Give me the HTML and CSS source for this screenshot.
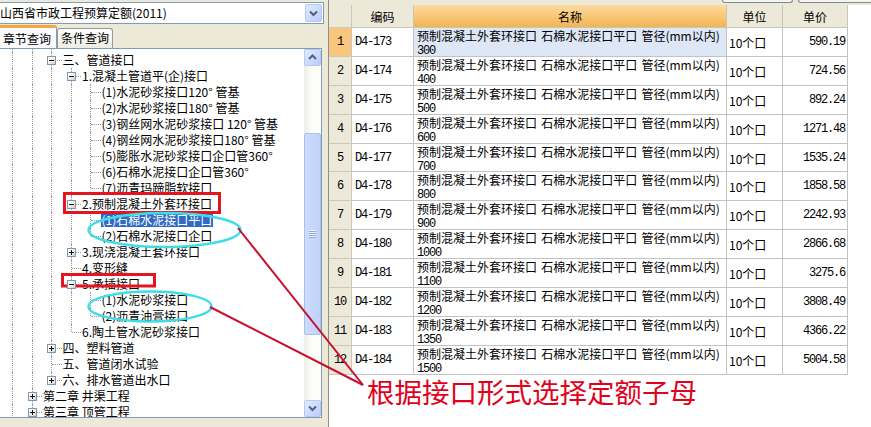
FILE: index.html
```html
<!DOCTYPE html>
<html lang="zh-CN">
<head>
<meta charset="utf-8">
<title>定额查询</title>
<link rel="stylesheet" href="styles.css">
</head>
<body>
<div class="app">
  <div class="left">
    <div class="combo">
      <span class="combo-text">山西省市政工程预算定额(2011)</span>
      <span class="sbtn combo-btn"><svg width="15" height="15" viewBox="0 0 15 15"><path d="M4 5.5 L7.5 9 L11 5.5" fill="none" stroke="#4d6185" stroke-width="2"/></svg></span>
    </div>
    <div class="tabs">
      <div class="tab active">章节查询</div>
      <div class="tab">条件查询</div>
    </div>
    <div class="treebox">
      <div class="tree">
        <div class="row spacer"><i class="c p"></i><i class="c p"></i><i class="c p"></i></div>
        <div class="row"><i class="c p"></i><i class="c p"></i><i class="c t"><b class="x m"></b></i><span class="lbl">三、管道接口</span></div>
        <div class="row"><i class="c p"></i><i class="c p"></i><i class="c p"></i><i class="c t"><b class="x m"></b></i><span class="lbl">1.混凝土管道平(企)接口</span></div>
        <div class="row"><i class="c p"></i><i class="c p"></i><i class="c p"></i><i class="c p"></i><i class="c t"></i><span class="lbl">(1)水泥砂浆接口120° 管基</span></div>
        <div class="row"><i class="c p"></i><i class="c p"></i><i class="c p"></i><i class="c p"></i><i class="c t"></i><span class="lbl">(2)水泥砂浆接口180° 管基</span></div>
        <div class="row"><i class="c p"></i><i class="c p"></i><i class="c p"></i><i class="c p"></i><i class="c t"></i><span class="lbl">(3)钢丝网水泥砂浆接口 120° 管基</span></div>
        <div class="row"><i class="c p"></i><i class="c p"></i><i class="c p"></i><i class="c p"></i><i class="c t"></i><span class="lbl">(4)钢丝网水泥砂浆接口180° 管基</span></div>
        <div class="row"><i class="c p"></i><i class="c p"></i><i class="c p"></i><i class="c p"></i><i class="c t"></i><span class="lbl">(5)膨胀水泥砂浆接口企口管360°</span></div>
        <div class="row"><i class="c p"></i><i class="c p"></i><i class="c p"></i><i class="c p"></i><i class="c t"></i><span class="lbl">(6)石棉水泥接口企口管360°</span></div>
        <div class="row"><i class="c p"></i><i class="c p"></i><i class="c p"></i><i class="c p"></i><i class="c e"></i><span class="lbl">(7)沥青玛蹄脂软接口</span></div>
        <div class="row"><i class="c p"></i><i class="c p"></i><i class="c p"></i><i class="c t"><b class="x m"></b></i><span class="lbl">2.预制混凝土外套环接口</span></div>
        <div class="row"><i class="c p"></i><i class="c p"></i><i class="c p"></i><i class="c p"></i><i class="c t"></i><span class="lbl sel">(1)石棉水泥接口平口</span></div>
        <div class="row"><i class="c p"></i><i class="c p"></i><i class="c p"></i><i class="c p"></i><i class="c e"></i><span class="lbl">(2)石棉水泥接口企口</span></div>
        <div class="row"><i class="c p"></i><i class="c p"></i><i class="c p"></i><i class="c t"><b class="x pl"></b></i><span class="lbl">3.现浇混凝土套环接口</span></div>
        <div class="row"><i class="c p"></i><i class="c p"></i><i class="c p"></i><i class="c t"></i><span class="lbl">4.变形缝</span></div>
        <div class="row"><i class="c p"></i><i class="c p"></i><i class="c p"></i><i class="c t"><b class="x m"></b></i><span class="lbl">5.承插接口</span></div>
        <div class="row"><i class="c p"></i><i class="c p"></i><i class="c p"></i><i class="c p"></i><i class="c t"></i><span class="lbl">(1)水泥砂浆接口</span></div>
        <div class="row"><i class="c p"></i><i class="c p"></i><i class="c p"></i><i class="c p"></i><i class="c e"></i><span class="lbl">(2)沥青油膏接口</span></div>
        <div class="row"><i class="c p"></i><i class="c p"></i><i class="c p"></i><i class="c e"></i><span class="lbl">6.陶土管水泥砂浆接口</span></div>
        <div class="row"><i class="c p"></i><i class="c p"></i><i class="c t"><b class="x pl"></b></i><span class="lbl">四、塑料管道</span></div>
        <div class="row"><i class="c p"></i><i class="c p"></i><i class="c t"></i><span class="lbl">五、管道闭水试验</span></div>
        <div class="row"><i class="c p"></i><i class="c p"></i><i class="c e"><b class="x pl"></b></i><span class="lbl">六、排水管道出水口</span></div>
        <div class="row"><i class="c p"></i><i class="c t"><b class="x pl"></b></i><span class="lbl">第二章 井渠工程</span></div>
        <div class="row"><i class="c p"></i><i class="c t"><b class="x pl"></b></i><span class="lbl">第三章 顶管工程</span></div>
      </div>
      <div class="vscroll">
        <span class="sbtn"><svg width="15" height="15" viewBox="0 0 15 15"><path d="M4 9 L7.5 5.5 L11 9" fill="none" stroke="#4d6185" stroke-width="2"/></svg></span>
        <div class="track"><div class="thumb"><span class="grip"></span></div></div>
        <span class="sbtn"><svg width="15" height="15" viewBox="0 0 15 15"><path d="M4 5.5 L7.5 9 L11 5.5" fill="none" stroke="#4d6185" stroke-width="2"/></svg></span>
      </div>
    </div>
  </div>

  <div class="right">
    <div class="strip"><span class="stub first"></span><span class="stub"></span></div>
    <div class="grid">
      <div class="hd rn"></div><div class="hd">编码</div><div class="hd sorted">名称</div><div class="hd">单位</div><div class="hd">单价</div>

      <div class="rn cur m">1</div><div class="code m">D4-173</div><div class="name hl">预制混凝土外套环接口 石棉水泥接口平口 管径(mm以内)<br><span class="m">300</span></div><div class="unit">10个口</div><div class="price m">590.19</div>
      <div class="rn m">2</div><div class="code m">D4-174</div><div class="name">预制混凝土外套环接口 石棉水泥接口平口 管径(mm以内)<br><span class="m">400</span></div><div class="unit">10个口</div><div class="price m">724.56</div>
      <div class="rn m">3</div><div class="code m">D4-175</div><div class="name">预制混凝土外套环接口 石棉水泥接口平口 管径(mm以内)<br><span class="m">500</span></div><div class="unit">10个口</div><div class="price m">892.24</div>
      <div class="rn m">4</div><div class="code m">D4-176</div><div class="name">预制混凝土外套环接口 石棉水泥接口平口 管径(mm以内)<br><span class="m">600</span></div><div class="unit">10个口</div><div class="price m">1271.48</div>
      <div class="rn m">5</div><div class="code m">D4-177</div><div class="name">预制混凝土外套环接口 石棉水泥接口平口 管径(mm以内)<br><span class="m">700</span></div><div class="unit">10个口</div><div class="price m">1535.24</div>
      <div class="rn m">6</div><div class="code m">D4-178</div><div class="name">预制混凝土外套环接口 石棉水泥接口平口 管径(mm以内)<br><span class="m">800</span></div><div class="unit">10个口</div><div class="price m">1858.58</div>
      <div class="rn m">7</div><div class="code m">D4-179</div><div class="name">预制混凝土外套环接口 石棉水泥接口平口 管径(mm以内)<br><span class="m">900</span></div><div class="unit">10个口</div><div class="price m">2242.93</div>
      <div class="rn m">8</div><div class="code m">D4-180</div><div class="name">预制混凝土外套环接口 石棉水泥接口平口 管径(mm以内)<br><span class="m">1000</span></div><div class="unit">10个口</div><div class="price m">2866.68</div>
      <div class="rn m">9</div><div class="code m">D4-181</div><div class="name">预制混凝土外套环接口 石棉水泥接口平口 管径(mm以内)<br><span class="m">1100</span></div><div class="unit">10个口</div><div class="price m">3275.6</div>
      <div class="rn m">10</div><div class="code m">D4-182</div><div class="name">预制混凝土外套环接口 石棉水泥接口平口 管径(mm以内)<br><span class="m">1200</span></div><div class="unit">10个口</div><div class="price m">3808.49</div>
      <div class="rn m">11</div><div class="code m">D4-183</div><div class="name">预制混凝土外套环接口 石棉水泥接口平口 管径(mm以内)<br><span class="m">1350</span></div><div class="unit">10个口</div><div class="price m">4366.22</div>
      <div class="rn m">12</div><div class="code m">D4-184</div><div class="name">预制混凝土外套环接口 石棉水泥接口平口 管径(mm以内)<br><span class="m">1500</span></div><div class="unit">10个口</div><div class="price m">5004.58</div>
    </div>
  </div>
</div>

<svg class="marks" width="871" height="427" viewBox="0 0 871 427">
  <rect x="64.5" y="193.5" width="155" height="19" fill="none" stroke="#e51520" stroke-width="3"/>
  <rect x="62.5" y="274.5" width="92" height="11.5" fill="none" stroke="#e51520" stroke-width="3"/>
  <ellipse cx="164.5" cy="230" rx="76" ry="17" fill="none" stroke="#3fdde6" stroke-width="2.5"/>
  <ellipse cx="150" cy="306.5" rx="61.5" ry="15" fill="none" stroke="#3fdde6" stroke-width="2.5"/>
  <line x1="238" y1="228" x2="363" y2="385" stroke="#c8102e" stroke-width="2"/>
  <line x1="210" y1="307" x2="363" y2="385" stroke="#c8102e" stroke-width="2"/>
</svg>
<div class="note">根据接口形式选择定额子母</div>
</body>
</html>
```

FILE: styles.css
```css
* { box-sizing: border-box; }
html, body { margin: 0; padding: 0; }
body {
  width: 871px;
  height: 427px;
  overflow: hidden;
  position: relative;
  background: #ece9d8;
  font-family: "Noto Sans CJK SC", "Noto Sans", sans-serif;
  font-size: 12px;
  color: #000;
}
.m {
  font-family: "Liberation Mono", monospace;
  letter-spacing: -1.2px;
}
.app { display: flex; height: 427px; }

/* ---------- left panel ---------- */
.left {
  flex: none;
  width: 327px;
  margin-left: -3px;
  display: flex;
  flex-direction: column;
}
.combo {
  margin-top: 2px;
  height: 22px;
  border: 1px solid #7f9db9;
  background: #fff;
  display: flex;
  align-items: center;
  padding: 0 1px 0 2px;
}
.combo-text { flex: 1; white-space: nowrap; line-height: 18px; }
.sbtn {
  flex: none;
  width: 17px;
  height: 17px;
  display: flex;
  align-items: center;
  justify-content: center;
  background: linear-gradient(135deg, #e3ebfe, #b9cdfa);
  border: 1px solid #b5c8f2;
  border-radius: 2px;
}
.combo-btn { height: 18px; }

.tabs {
  height: 24px;
  display: flex;
  align-items: flex-end;
}
.tab {
  width: 56px;
  height: 20px;
  line-height: 18px;
  text-align: center;
  border: 1px solid #919b9c;
  border-bottom: none;
  border-radius: 3px 3px 0 0;
  background: linear-gradient(#ffffff, #ecebe5);
}
.tab.active {
  width: 60px;
  height: 23px;
  line-height: 21px;
  background: #fcfcfe;
  border-top: 3px solid #f4a73a;
}

.treebox {
  height: 370px;
  margin-right: 2px;
  border: 1px solid #7f9db9;
  background: #fff;
  display: flex;
}
.tree {
  flex: 1;
  overflow: hidden;
  padding-left: 5px;
}
.row {
  display: flex;
  align-items: center;
  height: 16px;
  white-space: nowrap;
}
.row.spacer { height: 3px; }
.c {
  flex: none;
  width: 19.5px;
  height: 100%;
  position: relative;
}
.c.p::before, .c.t::before, .c.e::before {
  content: "";
  position: absolute;
  left: 9px;
  top: 0;
  bottom: 0;
  border-left: 1px dotted #9a9a9a;
}
.c.e::before { bottom: auto; height: 8px; }
.c.t::after, .c.e::after {
  content: "";
  position: absolute;
  left: 10px;
  right: 0;
  top: 8px;
  border-top: 1px dotted #9a9a9a;
}
.x {
  position: absolute;
  left: 5px;
  top: 4px;
  width: 9px;
  height: 9px;
  border: 1px solid #7b98b4;
  background: linear-gradient(135deg, #ffffff 30%, #d3cfc2);
  z-index: 1;
}
.x::before {
  content: "";
  position: absolute;
  left: 1px;
  top: 3px;
  width: 5px;
  height: 1px;
  background: #111;
}
.x.pl::after {
  content: "";
  position: absolute;
  left: 3px;
  top: 1px;
  width: 1px;
  height: 5px;
  background: #111;
}
.lbl {
  padding: 0 1px;
  height: 14px;
  line-height: 14px;
}
.lbl.sel { background: #316ac5; color: #fff; }

.vscroll {
  flex: none;
  width: 17px;
  display: flex;
  flex-direction: column;
  background: linear-gradient(90deg, #eeede5, #fbfbf8 40%, #fdfdfa);
}
.track { flex: 1; display: flex; flex-direction: column; }
.thumb {
  margin-top: 67px;
  height: 202px;
  border: 1px solid #a9bfee;
  border-radius: 2px;
  background: linear-gradient(90deg, #cddbfd, #c0d2fb);
  display: flex;
  align-items: center;
  justify-content: center;
}
.grip {
  width: 7px;
  height: 8px;
  background: repeating-linear-gradient(#eef3fe 0 1px, #8ea8e0 1px 2px);
}

/* ---------- right panel ---------- */
.right {
  flex: 1;
  margin-left: 4px;
  border-left: 1px solid #8f8f8f;
  background: #fff;
  display: flex;
  flex-direction: column;
}
.strip {
  height: 5px;
  background: #ece9d8;
  display: flex;
  align-items: flex-start;
}
.stub {
  width: 76px;
  height: 3px;
  margin-left: 5px;
  border: 1px solid #7d8796;
  border-top: none;
  border-radius: 0 0 4px 4px;
  background: #f5f4ee;
}
.stub.first { margin-left: 393px; width: 71px; }

.grid {
  display: grid;
  grid-template-columns: 23px 62px 313px 56px 65px;
  grid-template-rows: 23px repeat(12, 28.9px);
  width: 519px;
}
.grid > div {
  border-right: 1px solid #c2c2c2;
  border-bottom: 1px solid #c2c2c2;
  display: flex;
  align-items: center;
  white-space: nowrap;
  overflow: hidden;
}
.grid > .hd {
  background: #ece9d8;
  justify-content: center;
  border-color: #c9c6b6;
}
.grid > .hd.sorted { background: linear-gradient(#fcdba0, #f3b453); }
.grid > .rn {
  background: #ece9d8;
  justify-content: center;
  border-color: #cbc8b9;
}
.grid > .rn.cur { background: #f8c67c; }
.grid > .code { padding-left: 3px; }
.grid > .name {
  display: block;
  padding: 1px 3px 0;
  line-height: 13px;
  word-spacing: 1.5px;
}
.grid > .name.hl { background: #dde7f5; }
.grid > .unit { padding-left: 2px; padding-top: 1px; }
.grid > .price { justify-content: flex-end; padding-right: 2px; }

/* ---------- annotation overlay ---------- */
.marks {
  position: absolute;
  left: 0;
  top: 0;
  pointer-events: none;
}
.note {
  position: absolute;
  left: 367px;
  top: 378px;
  font-size: 27.5px;
  line-height: 1;
  color: #e2001a;
  white-space: nowrap;
}
```
